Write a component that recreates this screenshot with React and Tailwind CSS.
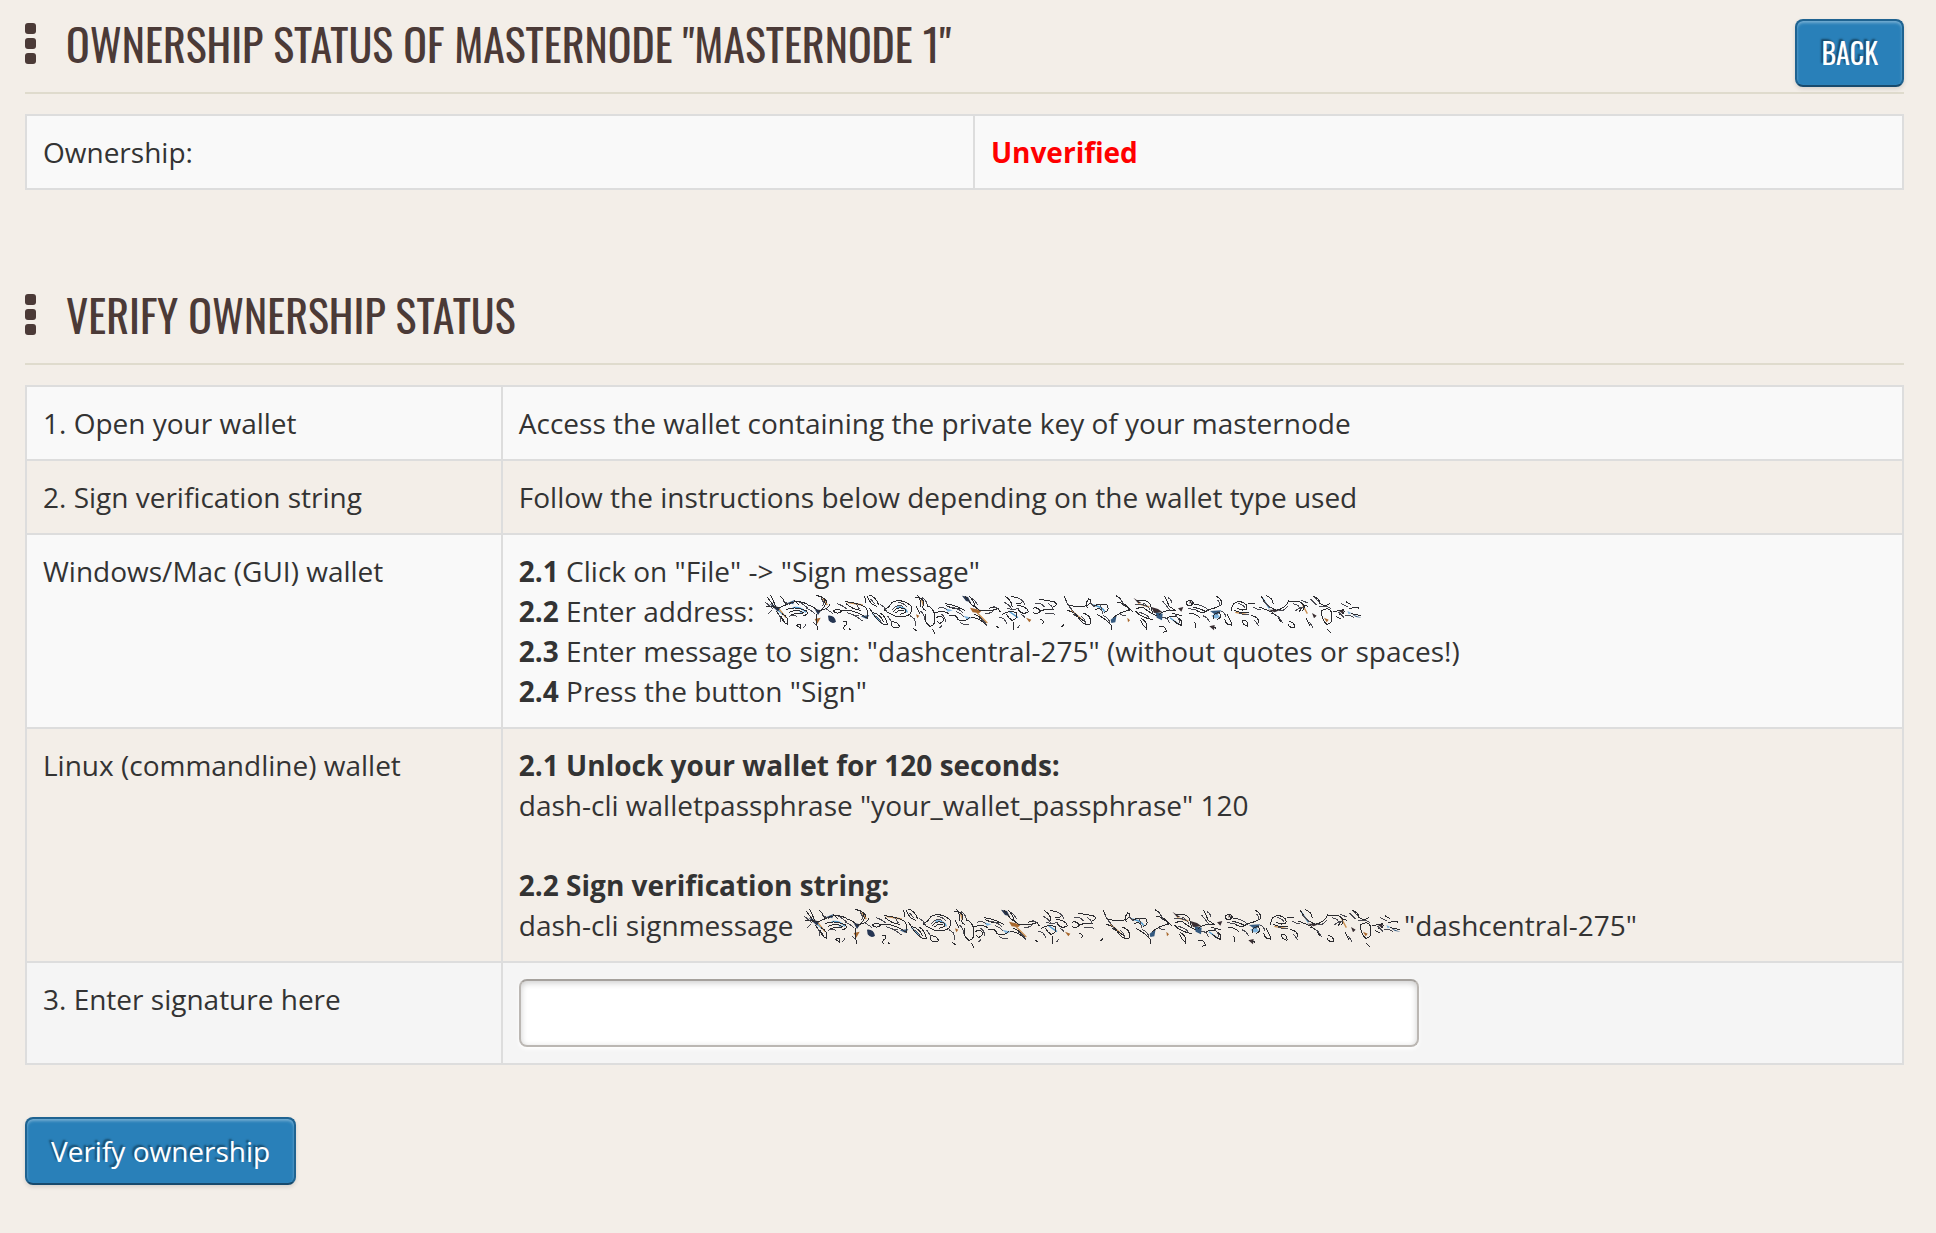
import React from "react";

// Strokes of the scrambled wallet address, drawn in a 1800 x 120 box
const scribbleLines = [
  "M24 10 L44 38 L60 48 M34 4 L50 40 M62 8 Q80 22 78 38 M20 38 L60 42 M50 52 L76 84 M68 60 Q90 70 84 92 Q70 88 66 66",
  "M60 42 Q88 28 108 24 Q140 24 150 38 M80 48 Q110 36 142 52 Q150 64 130 66 M90 56 Q116 44 134 58 M96 64 Q120 54 132 62 M106 20 L118 34",
  "M112 96 Q126 84 124 104 Z M150 34 Q170 44 178 54 Q196 44 202 22 Q190 8 170 6 M176 6 Q200 12 196 28 M170 60 L174 110 M186 50 Q210 44 212 30",
  "M222 52 Q236 42 246 52 Q240 62 226 56 Z M246 52 Q270 46 296 58 Q320 70 326 76 M256 24 Q290 26 318 40 Q330 58 324 76 M260 30 Q280 48 306 50",
  "M250 84 Q264 78 262 92 Q248 100 256 108 M268 104 L276 110 M322 6 L336 30 L352 38 M330 4 Q350 10 358 34 M316 8 L320 28 M330 42 Q340 60 354 78 Q372 96 384 92 Q380 68 362 58 M340 56 Q366 64 372 84",
  "M374 48 Q390 42 398 26 Q424 14 446 30 Q466 38 452 62 Q430 76 404 66 Q386 58 374 48 M400 56 Q414 36 438 46 Q446 58 422 62 M408 58 Q420 46 434 52 M398 84 Q420 86 420 100 Q400 108 396 92 Z",
  "M466 10 Q492 10 494 30 Q484 46 500 50 M474 4 Q488 22 484 40 M470 36 L482 62 M502 36 Q524 42 526 66 Q530 96 512 98 Q494 88 500 62 M520 106 L526 120 M462 104 L472 112",
  "M526 58 L548 52 L570 60 M530 72 Q548 62 554 78 Q540 98 534 82 M556 30 Q590 34 616 50 M560 36 Q584 48 604 44 M570 66 Q590 60 596 78 Q620 86 632 70 M616 6 L636 32 L664 52 M628 6 Q640 14 648 40",
  "M636 70 Q660 74 680 92 M644 62 Q668 70 672 84 M664 50 Q690 54 720 44 M690 44 Q710 34 724 56 M712 98 L718 104 M728 62 Q746 50 770 56 Q776 78 758 80 Q746 72 740 60 M762 84 L764 108",
  "M738 8 Q760 24 758 40 M754 10 Q776 8 790 22 Q784 34 770 30 M772 36 Q800 36 808 54 Q790 66 776 48 M820 44 Q834 38 844 52 Q832 66 822 56 M844 52 Q860 44 884 48 M838 16 L860 20 L884 24 Q900 34 882 40",
  "M844 76 Q860 86 848 90 M914 6 L926 34 Q956 42 984 36 Q1004 22 988 16 Q976 30 984 42 M922 50 Q950 54 960 76 Q974 96 992 92 Q1000 66 970 58 M906 100 L914 92 M940 62 Q962 70 980 88",
  "M1000 40 Q1020 26 1044 34 Q1052 54 1034 56 M1006 48 Q1024 42 1030 50 M1012 62 Q1042 76 1056 96 L1058 108 M1060 74 Q1082 54 1110 50 Q1104 28 1074 26 M1070 6 Q1088 14 1090 34 Q1108 40 1120 54",
  "M1132 20 Q1158 16 1172 30 L1180 60 M1130 46 Q1150 36 1160 48 Q1176 60 1194 68 M1146 74 Q1166 86 1162 106 Q1150 96 1144 80 M1128 52 Q1146 72 1180 78 M1216 8 L1230 38 L1250 52",
  "M1200 62 Q1220 46 1250 50 M1220 76 Q1236 62 1252 70 Q1270 78 1268 96 Q1250 90 1240 78 M1198 100 Q1214 92 1222 112 L1210 116 M1238 58 Q1256 66 1268 64 M1280 26 Q1296 14 1302 28 Q1292 44 1280 30",
  "M1296 30 Q1330 32 1348 50 Q1330 62 1310 50 M1300 40 Q1320 42 1340 54 M1290 58 Q1310 60 1324 74 M1306 84 L1310 104 M1340 50 Q1364 46 1386 34 Q1390 14 1370 8 M1364 76 Q1356 60 1380 56 Q1390 74 1372 78 M1360 104 Q1372 96 1370 110",
  "M1404 62 Q1414 80 1418 94 Q1400 96 1396 76 M1418 52 Q1414 24 1444 24 Q1468 32 1462 46 Q1448 54 1432 42 M1424 50 Q1444 60 1470 56 M1466 28 L1488 30 M1476 66 Q1500 70 1498 88 M1450 80 Q1468 80 1466 98 Q1450 96 1450 80",
  "M1506 8 L1524 36 L1550 50 M1520 6 Q1540 12 1542 32 M1500 40 L1540 56 M1536 58 Q1560 66 1564 86 M1550 50 Q1580 44 1588 22 L1620 24 Q1642 34 1630 52 M1590 84 Q1606 86 1606 100 Q1588 104 1586 90 M1620 54 Q1632 30 1646 38",
  "M1660 8 Q1680 12 1682 30 Q1696 40 1712 30 M1640 72 L1652 96 M1688 50 Q1714 36 1718 64 Q1720 92 1702 92 Q1684 76 1688 50 M1704 108 L1716 118 M1722 54 L1752 48 Q1760 60 1740 64 M1730 68 L1744 76 M1760 24 L1776 34 M1770 46 Q1790 38 1800 44 M1776 60 L1804 66",
];

// Finer strokes that fill the spaces between the main ones
const fineLines = [
  "M16 24 L40 44 M28 60 L36 50 M56 60 Q66 72 62 84 M72 22 Q82 30 92 32 M88 70 Q100 60 112 68 M120 26 Q136 32 150 50 M140 44 Q156 48 168 62 M184 14 Q196 22 190 38 M160 84 L172 96 M198 44 L222 60 M232 30 Q250 34 262 46 M276 62 Q296 70 310 82",
  "M262 56 Q284 66 300 66 M290 30 L300 46 M334 16 L346 30 M346 66 Q362 74 368 90 M362 32 Q378 40 382 54 M384 66 Q392 76 398 88 M416 26 Q434 28 442 40 M398 50 Q412 30 430 38 M452 66 L466 76 L470 98 M488 12 Q502 20 504 34 M484 52 Q496 62 496 80",
  "M536 44 Q552 38 564 48 M544 60 Q560 70 558 84 M572 40 Q594 42 610 56 M590 54 Q604 58 614 70 M602 86 Q616 96 628 92 M640 14 L656 34 M658 72 Q676 80 684 98 M676 58 Q694 62 704 50 M700 38 L716 44 M720 70 Q738 74 742 90 M734 26 Q752 32 758 50",
  "M776 14 Q792 18 796 34 M744 44 Q760 50 778 44 M784 60 L798 72 M828 28 Q846 28 856 40 M866 30 Q878 34 880 48 M856 60 Q872 56 886 62 M918 20 L934 44 M930 40 Q944 52 946 66 M964 66 Q978 76 980 92 M992 26 L1006 40 M1022 30 L1030 60 M1032 66 Q1048 72 1052 88",
  "M1078 12 Q1092 22 1094 36 M1082 60 Q1096 70 1100 64 M1126 34 Q1146 28 1166 40 M1140 56 Q1158 60 1170 72 M1152 28 Q1168 38 1172 50 M1210 22 L1232 50 M1226 12 Q1240 20 1238 36 M1208 70 Q1226 72 1230 88 M1246 62 Q1260 74 1262 88 M1286 44 Q1304 50 1316 44",
  "M1318 34 Q1338 38 1346 50 M1330 66 Q1344 70 1350 84 M1372 18 Q1384 24 1380 38 M1386 52 Q1396 56 1400 70 M1436 30 Q1454 32 1456 44 M1440 58 Q1458 66 1470 62 M1482 40 Q1494 48 1506 48 M1484 78 L1498 96 M1512 22 L1534 44 M1546 62 Q1562 70 1570 88 M1560 52 Q1576 52 1584 38",
  "M1602 30 Q1620 34 1622 46 M1608 52 Q1620 40 1634 42 M1626 20 L1646 28 M1654 16 L1672 34 M1664 10 L1680 26 M1680 40 Q1700 34 1714 44 M1650 84 L1662 104 M1738 56 L1754 72 M1746 30 L1766 40 M1758 66 Q1776 64 1784 72 M774 104 L782 94 M132 104 L140 92 M540 104 L548 96",
];

const scribbleShades = [
  { d: "M30 30 L62 42 L56 54 Z M166 46 L186 50 L176 64 Z M206 66 Q226 64 230 84 Q218 94 208 80 Z M608 6 L626 10 L634 26 L620 22 Z", fill: "#263653" },
  { d: "M166 76 L184 72 L174 90 Z M470 62 L480 66 L474 74 Z M632 42 L668 50 L660 58 L640 56 Z M800 72 L816 78 L810 86 Z M1104 72 L1112 80 L1106 86 Z M1694 72 L1708 78 L1702 86 Z", fill: "#a9682d" },
  { d: "M84 28 L104 20 L102 32 Z M304 68 L330 64 L322 76 Z M1054 78 L1072 64 L1068 86 L1056 88 Z M1188 54 L1210 60 L1208 80 L1192 72 Z M1352 52 L1386 50 L1372 66 Z M1778 62 L1806 72 L1790 70 Z", fill: "#34597f" },
  { d: "M1122 12 L1146 28 L1136 28 Z M1292 20 L1298 26 L1290 30 Z M1176 40 L1196 46 L1210 56 L1184 58 Z M1256 44 L1272 40 L1266 54 Z M1526 48 L1564 48 L1546 56 Z M1658 58 L1672 66 L1664 74 Z M1350 98 L1366 94 L1364 110 Z M1736 50 L1754 48 L1750 60 Z", fill: "#3b2f33" },
  { d: "M118 50 L132 54 L124 60 Z M1356 66 Q1370 56 1382 68 Q1370 82 1356 66 Z M556 44 L580 50 L566 54 Z M1764 52 L1776 58 L1768 62 Z M612 66 L638 72 L624 78 Z", fill: "#7eb4de" },
];

const scribbleTints = [
  "M40 34 L70 62 M100 42 Q124 38 140 56 M340 60 L362 84 M412 40 Q440 40 444 56 M748 52 L776 72 M1000 34 Q1028 38 1036 54 M1232 72 L1258 92 M1510 14 L1530 44",
  "M58 44 L80 72 M190 14 L204 34 M264 26 L310 34 M486 14 L492 36 M652 56 L684 88 M936 50 L966 76 M1136 30 L1170 40 M1428 56 L1462 62 M1630 34 L1644 60",
];

const ScrambledAddress = () => (
  <svg
    viewBox="8 -8 1788 120"
    role="img"
    aria-label="Scrambled wallet address"
    className="inline-block h-10 w-[596px] align-top overflow-visible"
    fill="none"
  >
    <path d={scribbleTints[0]} stroke="#4f9bd0" strokeWidth="4" />
    <path d={scribbleTints[1]} stroke="#c98d4c" strokeWidth="4" />
    {scribbleShades.map((shade) => (
      <path key={shade.fill} d={shade.d} fill={shade.fill} />
    ))}
    <g shapeRendering="crispEdges">
      {scribbleLines.map((d) => (
        <path key={d} d={d} stroke="#2b2b2f" strokeWidth="3" />
      ))}
      {fineLines.map((d) => (
        <path key={d} d={d} stroke="#4a4a52" strokeWidth="3" />
      ))}
    </g>
  </svg>
);

const buttonClass =
  "h-[68px] rounded-lg border-2 border-[#1f6391] border-b-[#174a6d] bg-[#2980b9] px-6 text-white cursor-pointer [text-shadow:-2px_-2px_2px_rgba(0,0,0,0.45)] shadow-[inset_0_2px_3px_rgba(255,255,255,0.35),0_2px_4px_rgba(0,0,0,0.12)]";

const SectionHeading = ({ children, action }) => (
  <div className="flex h-[94px] items-start justify-between border-b-2 border-[#dfdbcd]">
    <div className="flex gap-[30px] pt-[23px]">
      <div className="flex flex-col gap-1">
        <span className="size-[11px] rounded-[3px] bg-[#4b3a37]" />
        <span className="size-[11px] rounded-[3px] bg-[#4b3a37]" />
        <span className="size-[11px] rounded-[3px] bg-[#4b3a37]" />
      </div>
      <h2 className="font-['Oswald',sans-serif] text-[44px] leading-[42px] uppercase text-[#4b3a37]">
        {children}
      </h2>
    </div>
    {action}
  </div>
);

const cell = "border-2 border-[#ddd] p-4 text-left align-top font-normal";

const App = () => {
  return (
    <div className="min-h-screen bg-[#f3eee8] pl-[25px] pr-8 font-['Open_Sans',sans-serif] text-[28px] leading-10 text-[#333]">
      <SectionHeading
        action={
          <button type="button" className={`${buttonClass} font-['Oswald',sans-serif] mt-[19px] text-[28px] uppercase`}>
            Back
          </button>
        }
      >
        Ownership status of Masternode "Masternode 1"
      </SectionHeading>

      <table className="mt-5 w-full table-fixed border-collapse bg-[#f9f9f9]">
        <tbody>
          <tr>
            <th scope="row" className={`${cell} w-[50.5%]`}>Ownership:</th>
            <td className={cell}>
              <strong className="text-[#f00]">Unverified</strong>
            </td>
          </tr>
        </tbody>
      </table>

      <div className="mt-[81px]">
        <SectionHeading>Verify ownership status</SectionHeading>
      </div>

      <form onSubmit={(e) => e.preventDefault()}>
        <table className="mt-5 w-full table-fixed border-collapse">
          <tbody>
            <tr className="bg-[#f9f9f9]">
              <th scope="row" className={`${cell} w-[25.35%]`}>1. Open your wallet</th>
              <td className={cell}>Access the wallet containing the private key of your masternode</td>
            </tr>
            <tr>
              <th scope="row" className={cell}>2. Sign verification string</th>
              <td className={cell}>Follow the instructions below depending on the wallet type used</td>
            </tr>
            <tr className="bg-[#f9f9f9]">
              <th scope="row" className={cell}>Windows/Mac (GUI) wallet</th>
              <td className={cell}>
                <p><strong>2.1</strong> Click on "File" -&gt; "Sign message"</p>
                <p><strong>2.2</strong> Enter address: <ScrambledAddress /></p>
                <p><strong>2.3</strong> Enter message to sign: "dashcentral-275" (without quotes or spaces!)</p>
                <p><strong>2.4</strong> Press the button "Sign"</p>
              </td>
            </tr>
            <tr>
              <th scope="row" className={cell}>Linux (commandline) wallet</th>
              <td className={cell}>
                <p><strong>2.1 Unlock your wallet for 120 seconds:</strong></p>
                <p>dash-cli walletpassphrase "your_wallet_passphrase" 120</p>
                <p className="mt-10"><strong>2.2 Sign verification string:</strong></p>
                <p>dash-cli signmessage <ScrambledAddress /> "dashcentral-275"</p>
              </td>
            </tr>
            <tr className="bg-[#f5f5f5]">
              <th scope="row" className={cell}>
                <label htmlFor="signature">3. Enter signature here</label>
              </th>
              <td className={cell}>
                <input
                  id="signature"
                  type="text"
                  className="block h-[68px] w-full max-w-[900px] rounded-lg border-2 border-[#bbb7b3] border-t-[#a5a19d] bg-white px-4 shadow-[inset_0_2px_6px_rgba(0,0,0,0.2),0_2px_4px_#fff] outline-none"
                />
              </td>
            </tr>
          </tbody>
        </table>

        <button type="submit" className={`${buttonClass} mt-[52px]`}>
          Verify ownership
        </button>
      </form>
    </div>
  );
};

export default App;
